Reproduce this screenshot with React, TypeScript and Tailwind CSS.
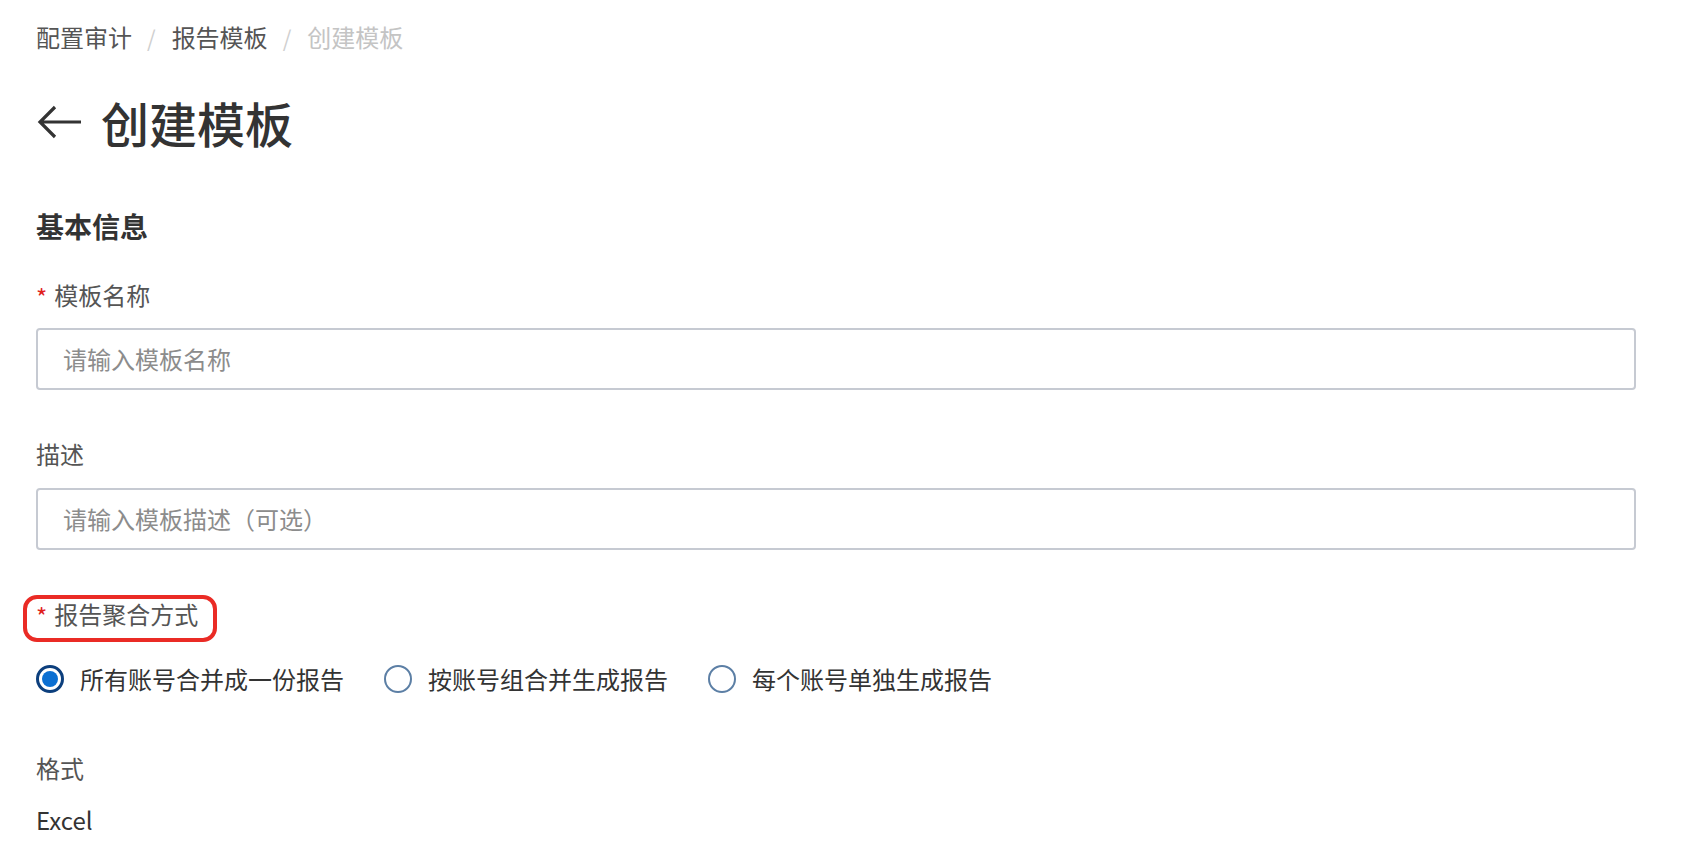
import React from "react";

const font = { fontFamily: '"Noto Sans CJK SC", "Noto Sans", sans-serif' };

function Radio({ checked, label }: { checked?: boolean; label: string }) {
  return (
    <div className="flex items-center mr-[40px]">
      {checked ? (
        <span className="w-[28px] h-[28px] rounded-full border-[3px] border-[#0c3f7d] flex items-center justify-center bg-white">
          <span className="w-[16px] h-[16px] rounded-full bg-[#0b6fd2]" />
        </span>
      ) : (
        <span className="w-[28px] h-[28px] rounded-full border-[2px] border-[#5c7fa5] bg-white" />
      )}
      <span className="ml-[16px] text-[24px] leading-[32px] text-[#333333]">{label}</span>
    </div>
  );
}

function Label({ text, required }: { text: string; required?: boolean }) {
  return (
    <div className="flex items-center h-[32px] text-[24px] leading-[32px] text-[#555555]">
      {required && <span className="relative top-[2px] text-[#e0201b] text-[24px] leading-[32px] mr-[7px]">*</span>}
      <span>{text}</span>
    </div>
  );
}

export default function App() {
  return (
    <div className="min-h-[852px] w-[1688px] bg-white pl-[36px] pt-[21px]" style={font}>
      {/* breadcrumb */}
      <div className="flex items-center text-[24px] leading-[32px]">
        <span className="text-[#555555]">配置审计</span>
        <span className="ml-[15px] mr-[16px] text-[#cfcfcf] text-[22px]">/</span>
        <span className="text-[#555555]">报告模板</span>
        <span className="ml-[15px] mr-[16px] text-[#cfcfcf] text-[22px]">/</span>
        <span className="text-[#c4c4c4]">创建模板</span>
      </div>

      {/* title */}
      <div className="flex items-center mt-[41px] h-[56px]">
        <svg width="46" height="36" viewBox="0 0 46 36" className="ml-[1px]">
          <path d="M44 18H4M18 3L3 18l15 15" fill="none" stroke="#333333" strokeWidth="3.2" strokeLinecap="butt" strokeLinejoin="miter" />
        </svg>
        <span className="ml-[18px] text-[48px] leading-[56px] font-medium text-[#333333]">创建模板</span>
      </div>

      {/* section */}
      <div className="mt-[58px] text-[28px] leading-[36px] font-semibold text-[#333333]">基本信息</div>

      <div className="mt-[35px]">
        <Label text="模板名称" required />
      </div>
      <div className="mt-[17px] w-[1600px] h-[62px] border-2 border-[#c6cad2] rounded-[4px] flex items-center pl-[25px] text-[24px] text-[#8c8c8c]">
        请输入模板名称
      </div>

      <div className="mt-[48px]">
        <Label text="描述" />
      </div>
      <div className="mt-[18px] w-[1600px] h-[62px] border-2 border-[#c6cad2] rounded-[4px] flex items-center pl-[25px] text-[24px] text-[#8c8c8c]">
        请输入模板描述（可选）
      </div>

      <div className="mt-[48px] relative w-fit">
        <Label text="报告聚合方式" required />
        <span className="absolute left-[-13px] top-[-3px] w-[194px] h-[47px] border-[4px] border-[#ea2b25] rounded-[14px] pointer-events-none" />
      </div>

      <div className="mt-[33px] flex items-center">
        <Radio checked label="所有账号合并成一份报告" />
        <Radio label="按账号组合并生成报告" />
        <Radio label="每个账号单独生成报告" />
      </div>

      <div className="mt-[57px]">
        <Label text="格式" />
      </div>
      <div className="mt-[20px] text-[24px] leading-[32px] text-[#333333]">Excel</div>
    </div>
  );
}
